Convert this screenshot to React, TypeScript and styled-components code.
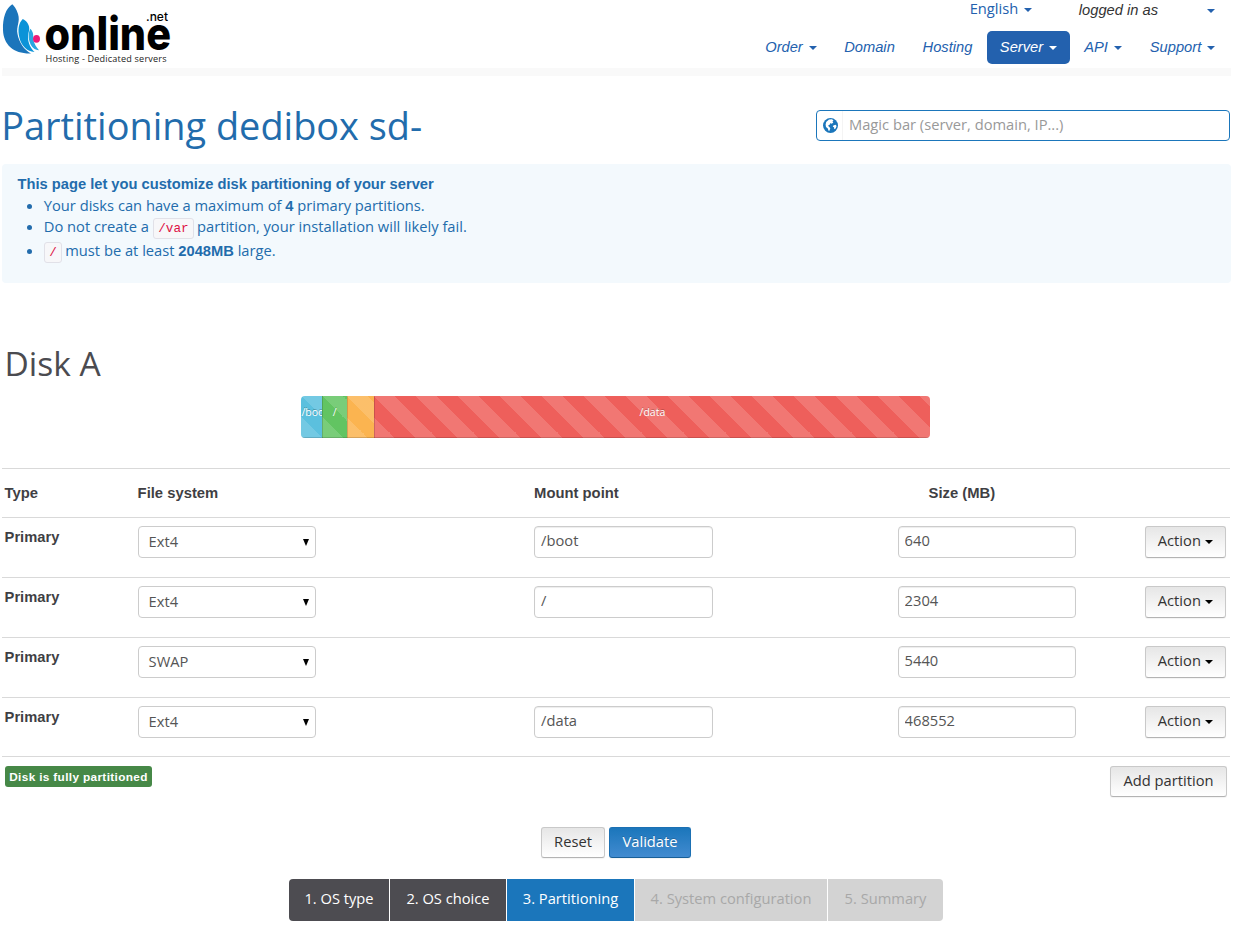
import React from "react";
import styled, { createGlobalStyle, css } from "styled-components";

const sans = `"Open Sans", "Noto Sans", sans-serif`;
const arial = `"Liberation Sans", Arial, sans-serif`;
const blue = "#226cac";

const GlobalStyle = createGlobalStyle`
  * { box-sizing: border-box; }
  body { margin: 0; background: #fff; color: #3f3f44; font: 14.7px/21px ${sans}; overflow: hidden; }
`;

const Page = styled.div`width: 1236px; height: 925px; padding: 0 5px 0 2px; overflow: hidden;`;
const Header = styled.header`
  height: 76px; display: flex; justify-content: space-between; border-bottom: 8px solid #f9f9f9;
`;
const Logo = styled.svg`display: block; flex: none; margin-left: -2px;`;
const Menus = styled.div`display: flex; flex-direction: column; align-items: flex-end; padding-right: 2px;`;
const TopLinks = styled.div`
  height: 31px; display: flex; align-items: flex-start; color: #2361ae; padding-right: 14px; line-height: 17px; white-space: nowrap;
`;
const LoggedIn = styled.span`font: italic 14.7px/20px ${arial}; color: #333; margin: 0 49px 0 47px;`;
const Nav = styled.nav`display: flex; height: 33px;`;
const NavItem = styled.a<{ $active?: boolean; $width: number }>`
  width: ${p => p.$width}px; height: 33px; display: flex; align-items: center; justify-content: center;
  font: italic 14.7px/33px ${arial}; border-radius: 5px;
  color: ${p => (p.$active ? "#fff" : "#2361ae")};
  background: ${p => (p.$active ? "#2361ae" : "transparent")};
`;
const Caret = styled.i<{ $gap?: number; $drop?: number }>`
  display: inline-block; flex: none; width: 0; height: 0; margin-left: ${p => p.$gap ?? 6}px; margin-top: ${p => p.$drop ?? 0}px;
  border: 4.5px solid transparent; border-top: 4px solid currentColor; border-bottom: 0; vertical-align: middle;
`;
const TitleRow = styled.div`height: 88px; display: flex; justify-content: space-between; padding-right: 1px;`;
const Title = styled.h1`margin: 0 0 0 -.8px; padding-top: 28px; font: 400 37.9px/42px ${sans}; color: ${blue}; white-space: nowrap;`;
const Search = styled.div`
  width: 414px; height: 31px; margin-top: 34px; display: flex; align-items: center;
  border: 1px solid #1b76bb; border-radius: 4px; color: #999;
`;
const SearchIcon = styled.span`width: 26px; height: 29px; padding: 6px 0 0 6px; border-right: 1px solid #f4f4f4;`;
const Placeholder = styled.span`padding-left: 6px; line-height: 27px; height: 29px;`;
const Notice = styled.section`
  height: 119px; padding: 10px 15.5px; border-radius: 4px; background: #f3f9fd; color: ${blue};
`;
const Strong = styled.strong`font-family: ${arial}; font-weight: 700;`;
const NoticeTitle = styled(Strong)`display: block; line-height: 20px;`;
const Rules = styled.ul`margin: 1px 0 0; padding: 0 0 0 26.3px;`;
const Rule = styled.li<{ $height: number }>`height: ${p => p.$height}px; line-height: 21px;`;
const Code = styled.code`
  display: inline-block; height: 21px; padding: 0 4.5px; border: 1px solid #e1e1e8; border-radius: 3px;
  background: #f7f7f9; color: #dd1144; font: 12.7px/19px "Liberation Mono", monospace; vertical-align: top;
  margin: 2px -1px 0 0;
`;
const DiskTitle = styled.h2`margin: 59px 0 0 2.5px; height: 43px; font: 400 33.5px/42px ${sans}; color: #4b4b50;`;
const Usage = styled.div`
  width: 629px; height: 42px; margin: 11px 0 30px 299.4px; display: flex; border-radius: 4px; overflow: hidden;
`;
const Segment = styled.div<{ $color: string; $width: number }>`
  width: ${p => p.$width}px; height: 42px; overflow: hidden; display: flex; justify-content: safe center;
  color: #fff; font-size: 10.5px; line-height: 32px; white-space: nowrap; text-shadow: 0 -1px 0 rgba(0,0,0,.25);
  background-color: ${p => p.$color};
  background-image: linear-gradient(45deg, rgba(255,255,255,.15) 25%, transparent 25%, transparent 50%, rgba(255,255,255,.15) 50%, rgba(255,255,255,.15) 75%, transparent 75%);
  background-size: 42px 42px;
  box-shadow: inset 0 -1px 0 rgba(0,0,0,.15);
  & + & { box-shadow: inset 1px 0 0 rgba(0,0,0,.15), inset 0 -1px 0 rgba(0,0,0,.15); }
`;
const Table = styled.div`width: 1228px;`;
const Row = styled.div<{ $height: number }>`
  height: ${p => p.$height}px; border-top: 1px solid #d9d9d9; display: grid;
  grid-template-columns: 133px 396.5px 363.5px 247px 1fr; padding-left: 2.6px; align-items: start; padding-top: 8px;
  & > button { height: 32px; }
`;
const HeadCell = styled(Strong)<{ $indent?: number }>`padding: 6px 0 0 ${p => p.$indent ?? 0}px; font-size: 14.8px;`;
const TypeCell = styled(Strong)`line-height: 20px; padding-top: 1px;`;
const field = css`
  width: 178.5px; height: 32px; border: 1px solid #ccc; border-radius: 4px; background: #fff; color: #555;
  font: 14.7px/20px ${sans};
`;
const Select = styled.div`
  ${field} display: flex; align-items: center; justify-content: space-between; padding: 0 6px 2px 10px;
`;
const Arrow = styled.i`border: 3.5px solid transparent; border-top: 7px solid #000; border-bottom: 0; margin-top: 2px;`;
const Input = styled.input`${field} padding: 0 6px 4px; box-shadow: inset 0 1px 1px rgba(0,0,0,.075);`;
const Button = styled.button<{ $width: number; $primary?: boolean }>`
  width: ${p => p.$width}px; height: 31px; padding: 0 0 4px; display: flex; align-items: center; justify-content: center;
  border: 1px solid #c9c9c9; border-bottom-color: #b3b3b3; border-radius: 3px; font: 14.7px/20px ${sans}; white-space: nowrap;
  color: #333; background: linear-gradient(#e6e6e6, #fff); box-shadow: 0 1px 1px rgba(0,0,0,.05);
  i { color: #000; }
  ${p => p.$primary && css`
    color: #fff; border-color: #1b70b3 #1b70b3 #185f98; background: linear-gradient(#1b76bb, #428bd0); text-shadow: 0 -1px 0 rgba(0,0,0,.2);
  `}
`;
const TableFoot = styled.div`
  height: 71px; border-top: 1px solid #d9d9d9; padding: 9px 3px 0 3px; display: flex; justify-content: space-between; align-items: flex-start;
`;
const Label = styled.span`
  width: 147px; height: 21px; border-radius: 3px; background: #468847; color: #fff; text-align: center;
  font: 700 11.8px/22px ${arial}; letter-spacing: .35px; white-space: nowrap;
`;
const Buttons = styled.div`display: flex; gap: 4px; padding-left: 539px;`;
const Steps = styled.ol`
  list-style: none; width: 654px; height: 42px; margin: 21px 0 0 287px; padding: 0; display: flex; gap: 1px; border-radius: 4px; overflow: hidden;
`;
const Step = styled.li<{ $state: "done" | "current" | "next"; $width: number }>`
  width: ${p => p.$width}px; flex: none; text-align: center; line-height: 39px; white-space: nowrap;
  color: ${p => (p.$state === "next" ? "#a8a8a8" : "#fff")};
  background: ${p => ({ done: "#4d4c51", current: "#1b76bb", next: "#d3d3d3" })[p.$state]};
`;

const nav = [
  { name: "Order", width: 80, caret: true },
  { name: "Domain", width: 77 },
  { name: "Hosting", width: 79 },
  { name: "Server", width: 83, caret: true, active: true },
  { name: "API", width: 66, caret: true },
  { name: "Support", width: 93, caret: true },
];
const segments = [
  { name: "/boot", color: "#5bc0de", width: 21 },
  { name: "/", color: "#62c462", width: 24.5 },
  { name: "", color: "#fbb450", width: 27.5 },
  { name: "/data", color: "#ee5f5b", width: 556 },
];
const partitions = [
  { fs: "Ext4", mount: "/boot", size: "640", height: 60 },
  { fs: "Ext4", mount: "/", size: "2304", height: 60 },
  { fs: "SWAP", mount: "", size: "5440", height: 60 },
  { fs: "Ext4", mount: "/data", size: "468552", height: 59 },
];

const BrandLogo = () => (
  <Logo width="176" height="68" viewBox="0 0 176 68">
    <path fill="#1b75bb" d="M12.3 4.3 C6 8 2.5 18 3 30 C3.5 45 14 54 31 53.5 C24 50 19 42 17.5 34 C16 26 20.5 22 18 14 C16.5 9 14 6 12.3 4.3Z" />
    <path fill="#0b93d8" d="M22.8 19 C18.5 23 17.5 30 19.5 38 C21.5 46 27 51.5 34.5 52 C30.5 48 28 43 28 37 C28 32 30.5 30 28.5 25 C27.5 22 25 20 22.8 19Z" />
    <path fill="#2aa7e1" d="M30.5 28.8 C28 33 28.2 38 30 43 C31.5 47 34.5 50 39 50.3 C36 47 34.5 44 33.5 40.5 C32.8 37 34.5 33.5 30.5 28.8Z" />
    <ellipse cx="36.5" cy="38.8" rx="3.5" ry="3.9" fill="#ed1c78" />
    <text x="44.5" y="49.5" textLength="126.5" lengthAdjust="spacingAndGlyphs" fontFamily="Inter, sans-serif" fontWeight="800" fontSize="46">online</text>
    <text x="146" y="20.5" textLength="22" lengthAdjust="spacingAndGlyphs" fontFamily="Inter, sans-serif" fontWeight="500" fontSize="12">.net</text>
    <text x="45.5" y="62" textLength="121" fontFamily="Open Sans, sans-serif" fontSize="9.1" fill="#222">Hosting - Dedicated servers</text>
  </Logo>
);

const Globe = () => (
  <svg width="15" height="15" viewBox="0 0 15 15">
    <circle cx="7.5" cy="7.5" r="7.5" fill="#1b76bb" />
    <path fill="#fff" d="M6 1.5 L9 1.2 L10.5 2.5 L9.5 3.5 L10.3 4.8 L8.5 5.8 L7.5 5 L6.8 6.5 L5 7.8 L6.3 9 L7.3 10.3 L6.5 12.8 L5.5 12.8 L4.8 10.6 L3 8.9 L2.6 6.5 L3.2 4Z M10.3 7.5 L12.6 6.8 L13.6 8 L12.6 10.5 L11.3 11.2 L11 9.3 L9.8 8.7Z" />
  </svg>
);

export default function App() {
  return (
    <>
      <GlobalStyle />
      <Page>
        <Header>
          <BrandLogo />
          <Menus>
            <TopLinks>
              <span>English<Caret $gap={5.5} /></span>
              <LoggedIn>logged in as</LoggedIn>
              <Caret $gap={0} $drop={9} />
            </TopLinks>
            <Nav>
              {nav.map(n => (
                <NavItem key={n.name} $width={n.width} $active={n.active}>{n.name}{n.caret && <Caret $drop={1} />}</NavItem>
              ))}
            </Nav>
          </Menus>
        </Header>
        <TitleRow>
          <Title>Partitioning dedibox sd-</Title>
          <Search>
            <SearchIcon><Globe /></SearchIcon>
            <Placeholder>Magic bar (server, domain, IP...)</Placeholder>
          </Search>
        </TitleRow>
        <Notice>
          <NoticeTitle>This page let you customize disk partitioning of your server</NoticeTitle>
          <Rules>
            <Rule $height={21}>Your disks can have a maximum of <Strong>4</Strong> primary partitions.</Rule>
            <Rule $height={24}>Do not create a <Code>/var</Code> partition, your installation will likely fail.</Rule>
            <Rule $height={24}><Code>/</Code> must be at least <Strong>2048MB</Strong> large.</Rule>
          </Rules>
        </Notice>
        <DiskTitle>Disk A</DiskTitle>
        <Usage>
          {segments.map(s => <Segment key={s.color} $color={s.color} $width={s.width}>{s.name}</Segment>)}
        </Usage>
        <Table>
          <Row $height={49}>
            <HeadCell>Type</HeadCell>
            <HeadCell>File system</HeadCell>
            <HeadCell>Mount point</HeadCell>
            <HeadCell $indent={31}>Size (MB)</HeadCell>
          </Row>
          {partitions.map(p => (
            <Row key={p.size} $height={p.height}>
              <TypeCell>Primary</TypeCell>
              <Select>{p.fs}<Arrow /></Select>
              {p.mount ? <Input defaultValue={p.mount} /> : <span />}
              <Input defaultValue={p.size} />
              <Button $width={81.5}>Action<Caret $gap={4} $drop={3} /></Button>
            </Row>
          ))}
          <TableFoot>
            <Label>Disk is fully partitioned</Label>
            <Button $width={117}>Add partition</Button>
          </TableFoot>
        </Table>
        <Buttons>
          <Button $width={64}>Reset</Button>
          <Button $width={82} $primary>Validate</Button>
        </Buttons>
        <Steps>
          <Step $state="done" $width={100}>1. OS type</Step>
          <Step $state="done" $width={116}>2. OS choice</Step>
          <Step $state="current" $width={127}>3. Partitioning</Step>
          <Step $state="next" $width={192}>4. System configuration</Step>
          <Step $state="next" $width={115}>5. Summary</Step>
        </Steps>
      </Page>
    </>
  );
}
